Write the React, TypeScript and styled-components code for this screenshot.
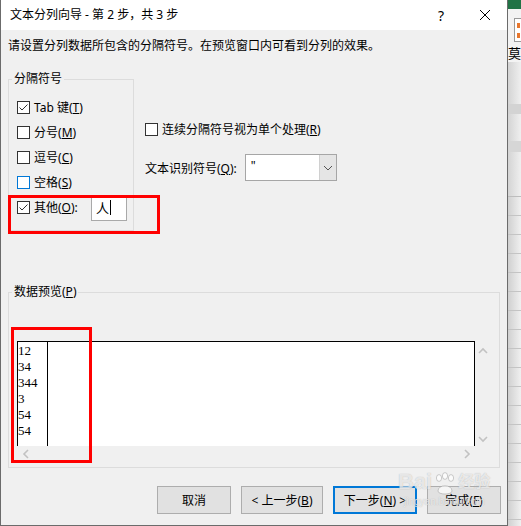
import React from 'react'
import styled, { createGlobalStyle } from 'styled-components'

const GlobalStyle = createGlobalStyle`
  html, body {
    margin: 0;
    padding: 0;
  }
  body {
    font-family: "Noto Sans", "Noto Sans CJK SC", sans-serif;
    font-size: 12px;
    color: #000;
  }
`

const S = {
  Screen: styled.div`
    position: relative;
    display: flex;
    width: 521px;
    height: 526px;
    overflow: hidden;
    background: #f0f0f0;
  `,
  Dialog: styled.div`
    box-sizing: border-box;
    width: 508px;
    height: 526px;
    display: flex;
    flex-direction: column;
    background: #f0f0f0;
    border: 1px solid #6b6b6b;
    border-top: none;
  `,
  TitleBar: styled.div`
    display: flex;
    align-items: center;
    height: 30px;
    flex-shrink: 0;
    padding-left: 9px;
    background: #fff;
  `,
  Title: styled.div`
    flex: 1;
    font-size: 12px;
    line-height: 16px;
  `,
  TitleButton: styled.div`
    display: flex;
    align-items: center;
    justify-content: center;
    width: 44px;
    height: 30px;
    font-size: 14px;
  `,
  Body: styled.div`
    display: flex;
    flex-direction: column;
    padding: 8px 6px 0 7px;
  `,
  Instruction: styled.div`
    line-height: 16px;
  `,
  TopRow: styled.div`
    position: relative;
    display: flex;
    gap: 11px;
    margin-top: 19px;
  `,
  Group: styled.fieldset<{ $width: number; $height?: number }>`
    box-sizing: border-box;
    width: ${({ $width }) => $width}px;
    ${({ $height }) => ($height ? `height: ${$height}px;` : '')}
    min-width: 0;
    margin: 0;
    padding: 0 6px 5px 8px;
    border: 1px solid #dcdcdc;
  `,
  Legend: styled.legend`
    margin-left: -5px;
    padding: 0 2px;
    font-size: 12px;
    line-height: 12px;
  `,
  CheckList: styled.div`
    display: flex;
    flex-direction: column;
    padding-top: 10px;
  `,
  CheckRow: styled.label`
    display: flex;
    align-items: center;
    gap: 4px;
    height: 25px;
    line-height: 16px;
  `,
  Box: styled.span<{ $focus?: boolean }>`
    box-sizing: border-box;
    display: inline-flex;
    width: 13px;
    height: 13px;
    flex-shrink: 0;
    background: #fff;
    border: 1px solid ${({ $focus }) => ($focus ? '#0078d7' : '#333')};
  `,
  OtherInput: styled.div`
    box-sizing: border-box;
    display: flex;
    align-items: center;
    width: 36px;
    height: 26px;
    margin-left: auto;
    padding-left: 4px;
    background: #fff;
    border: 1px solid #a9a9a9;
    font-size: 13px;
  `,
  Caret: styled.span`
    display: inline-block;
    width: 1px;
    height: 15px;
    margin-left: 1px;
    background: #000;
  `,
  Marker: styled.div<{ $left: number; $top: number; $width: number; $height: number }>`
    position: absolute;
    box-sizing: border-box;
    left: ${({ $left }) => $left}px;
    top: ${({ $top }) => $top}px;
    width: ${({ $width }) => $width}px;
    height: ${({ $height }) => $height}px;
    border: 3px solid #f00;
    pointer-events: none;
  `,
  RightColumn: styled.div`
    display: flex;
    flex-direction: column;
    padding-top: 44px;
  `,
  ComboRow: styled.div`
    display: flex;
    align-items: center;
    gap: 8px;
    margin-top: 12px;
  `,
  Combo: styled.div`
    box-sizing: border-box;
    display: flex;
    width: 92px;
    height: 27px;
    background: #fff;
    border: 1px solid #a6a6a6;
  `,
  ComboValue: styled.div`
    flex: 1;
    padding: 4px 0 0 5px;
    font-size: 12px;
    line-height: 14px;
  `,
  ComboButton: styled.div`
    display: flex;
    align-items: center;
    justify-content: center;
    width: 16px;
    background: #e5e5e5;
    border-left: 1px solid #d0d0d0;
  `,
  PreviewGroup: styled.fieldset`
    box-sizing: border-box;
    width: 492px;
    min-width: 0;
    margin: 55px 0 0;
    padding: 0 8px 5px;
    border: 1px solid #dcdcdc;
  `,
  PreviewGrid: styled.div`
    position: relative;
    display: grid;
    grid-template-columns: 1fr 16px;
    grid-template-rows: 105px 16px;
    margin-top: 43px;
  `,
  PreviewTable: styled.div`
    display: flex;
    background: #fff;
    border: 1px solid #000;
    border-bottom: none;
  `,
  PreviewColumn: styled.div<{ $width?: number }>`
    ${({ $width }) => ($width ? `width: ${$width}px; border-right: 1px solid #000;` : 'flex: 1;')}
    padding-top: 1px;
    font-family: "Liberation Serif", "DejaVu Serif", serif;
    font-size: 13px;
    line-height: 16px;
  `,
  VScroll: styled.div`
    display: flex;
    flex-direction: column;
    align-items: center;
    justify-content: space-between;
    padding: 6px 0 3px;
  `,
  HScroll: styled.div`
    display: flex;
    align-items: center;
    justify-content: space-between;
    padding: 0 4px 0 5px;
  `,
  Buttons: styled.div`
    display: flex;
    justify-content: flex-end;
    gap: 10px;
    margin-top: 18px;
  `,
  Button: styled.div<{ $width: number; $primary?: boolean }>`
    box-sizing: border-box;
    display: flex;
    align-items: center;
    justify-content: center;
    width: ${({ $width }) => $width}px;
    height: 28px;
    background: #e1e1e1;
    border: ${({ $primary }) => ($primary ? '2px solid #0078d7' : '1px solid #adadad')};
    font-size: 12px;
  `,
  Watermark: styled.div`
    position: absolute;
    left: 398px;
    top: 468px;
    width: 98px;
    height: 50px;
    pointer-events: none;
    color: rgba(255, 255, 255, 0.7);
    text-shadow: 0 0 1px rgba(130, 130, 130, 0.6);
    font-family: "Liberation Sans", "Noto Sans CJK SC", sans-serif;
  `,
  WaterLogo: styled.div`
    display: flex;
    align-items: flex-end;
    gap: 2px;
    font-size: 22px;
    font-weight: bold;
    line-height: 28px;
  `,
  WaterSmall: styled.div`
    font-size: 10px;
    line-height: 12px;
    padding-left: 6px;
  `,
  Excel: styled.div`
    flex: 1;
    display: flex;
    flex-direction: column;
    overflow: hidden;
  `,
  ExcelGreen: styled.div`
    height: 9px;
    background: #217346;
  `,
  Ribbon: styled.div`
    position: relative;
    height: 53px;
    background: #f3f3f3;
    overflow: hidden;
  `,
  RibbonIcon: styled.div`
    position: absolute;
    left: 6px;
    top: 9px;
    width: 12px;
    height: 24px;
    box-sizing: border-box;
    border: 1px solid #9a9a9a;
    background:
      linear-gradient(#e8772e, #e8772e) 2px 4px / 3px 5px no-repeat,
      linear-gradient(#e8772e, #e8772e) 2px 14px / 3px 5px no-repeat,
      #fff;
  `,
  RibbonText: styled.div`
    position: absolute;
    left: 0;
    top: 37px;
    font-size: 13px;
    line-height: 14px;
    white-space: nowrap;
    font-family: "Noto Sans CJK SC", sans-serif;
  `,
  Headers: styled.div`
    height: 135px;
    background:
      linear-gradient(#d3d3d3, #d3d3d3) 0 42px / 100% 10px no-repeat,
      linear-gradient(#d6d6d6, #d6d6d6) 0 79px / 100% 11px no-repeat,
      linear-gradient(#bdbdbd, #bdbdbd) 0 134px / 100% 1px no-repeat,
      linear-gradient(to right, #d4d4d4, #efefef);
  `,
  Grid: styled.div`
    flex: 1;
    background:
      repeating-linear-gradient(to bottom, transparent 0 18px, #c4c4c4 18px 19px),
      linear-gradient(to right, #d0d0d0, #f0f0f0);
  `,
}

const Check = ({ checked, focus }: { checked?: boolean; focus?: boolean }) => (
  <S.Box $focus={focus}>
    {checked && (
      <svg width="11" height="11" viewBox="0 0 11 11">
        <polyline points="1.5,5.5 4,8 9.5,2.5" fill="none" stroke="#333" strokeWidth="1" />
      </svg>
    )}
  </S.Box>
)

const Chevron = ({ dir }: { dir: 'up' | 'down' | 'left' | 'right' }) => {
  const points = {
    up: '1,6 5,2 9,6',
    down: '1,2 5,6 9,2',
    left: '6,1 2,5 6,9',
    right: '2,1 6,5 2,9',
  }[dir]
  const horizontal = dir === 'left' || dir === 'right'
  return (
    <svg width={horizontal ? 8 : 10} height={horizontal ? 10 : 8} viewBox={horizontal ? '0 0 8 10' : '0 0 10 8'}>
      <polyline points={points} fill="none" stroke="#c2c2c2" strokeWidth="1.6" />
    </svg>
  )
}

const separators = [
  { label: 'Tab 键', key: 'T', checked: true },
  { label: '分号', key: 'M' },
  { label: '逗号', key: 'C' },
  { label: '空格', key: 'S', focus: true },
]

const previewRows = ['12', '34', '344', '3', '54', '54']

export default function App() {
  return (
    <>
      <GlobalStyle />
      <S.Screen>
        <S.Dialog>
          <S.TitleBar>
            <S.Title>文本分列向导 - 第 2 步，共 3 步</S.Title>
            <S.TitleButton>?</S.TitleButton>
            <S.TitleButton>
              <svg width="12" height="12" viewBox="0 0 12 12">
                <path d="M1 1 L11 11 M11 1 L1 11" stroke="#000" strokeWidth="1" />
              </svg>
            </S.TitleButton>
          </S.TitleBar>
          <S.Body>
            <S.Instruction>请设置分列数据所包含的分隔符号。在预览窗口内可看到分列的效果。</S.Instruction>
            <S.TopRow>
              <S.Group $width={126} $height={158}>
                <S.Legend>分隔符号</S.Legend>
                <S.CheckList>
                  {separators.map((item) => (
                    <S.CheckRow key={item.key}>
                      <Check checked={item.checked} focus={item.focus} />
                      <span>
                        {item.label}(<u>{item.key}</u>)
                      </span>
                    </S.CheckRow>
                  ))}
                  <S.CheckRow>
                    <Check checked />
                    <span>
                      其他(<u>O</u>):
                    </span>
                    <S.OtherInput>
                      人<S.Caret />
                    </S.OtherInput>
                  </S.CheckRow>
                </S.CheckList>
              </S.Group>
              <S.RightColumn>
                <S.CheckRow>
                  <Check />
                  <span>
                    连续分隔符号视为单个处理(<u>R</u>)
                  </span>
                </S.CheckRow>
                <S.ComboRow>
                  <span>
                    文本识别符号(<u>Q</u>):
                  </span>
                  <S.Combo>
                    <S.ComboValue>"</S.ComboValue>
                    <S.ComboButton>
                      <svg width="10" height="6" viewBox="0 0 10 6">
                        <polyline points="1,1 5,5 9,1" fill="none" stroke="#555" strokeWidth="1" />
                      </svg>
                    </S.ComboButton>
                  </S.Combo>
                </S.ComboRow>
              </S.RightColumn>
              <S.Marker $left={0} $top={122} $width={152} $height={39} />
            </S.TopRow>
            <S.PreviewGroup>
              <S.Legend>
                数据预览(<u>P</u>)
              </S.Legend>
              <S.PreviewGrid>
                <S.PreviewTable>
                  <S.PreviewColumn $width={29}>
                    {previewRows.map((row, i) => (
                      <div key={i}>{row}</div>
                    ))}
                  </S.PreviewColumn>
                  <S.PreviewColumn />
                </S.PreviewTable>
                <S.VScroll>
                  <Chevron dir="up" />
                  <Chevron dir="down" />
                </S.VScroll>
                <S.HScroll>
                  <Chevron dir="left" />
                  <Chevron dir="right" />
                </S.HScroll>
                <S.Marker $left={-6} $top={-14} $width={81} $height={136} />
              </S.PreviewGrid>
            </S.PreviewGroup>
            <S.Buttons>
              <S.Button $width={74}>取消</S.Button>
              <S.Button $width={82}>
                &lt; 上一步(<u>B</u>)
              </S.Button>
              <S.Button $width={84} $primary>
                下一步(<u>N</u>) &gt;
              </S.Button>
              <S.Button $width={74}>
                完成(<u>F</u>)
              </S.Button>
            </S.Buttons>
          </S.Body>
        </S.Dialog>
        <S.Excel>
          <S.ExcelGreen />
          <S.Ribbon>
            <S.RibbonIcon />
            <S.RibbonText>莫拮</S.RibbonText>
          </S.Ribbon>
          <S.Headers />
          <S.Grid />
        </S.Excel>
        <S.Watermark>
          <S.WaterLogo>
            <span>Bai</span>
            <svg width="22" height="24" viewBox="0 0 22 24">
              <g fill="rgba(255,255,255,0.7)" stroke="rgba(140,140,140,0.55)" strokeWidth="0.8">
                <ellipse cx="5" cy="6" rx="2.6" ry="3.4" />
                <ellipse cx="11" cy="4" rx="2.6" ry="3.4" />
                <ellipse cx="17" cy="6" rx="2.6" ry="3.4" />
                <path d="M4 19 C4 12 18 12 18 19 C18 23 4 23 4 19 Z" />
              </g>
            </svg>
            <span style={{ fontSize: 16 }}>经验</span>
          </S.WaterLogo>
          <S.WaterSmall>jingyan.baidu.com</S.WaterSmall>
        </S.Watermark>
      </S.Screen>
    </>
  )
}
